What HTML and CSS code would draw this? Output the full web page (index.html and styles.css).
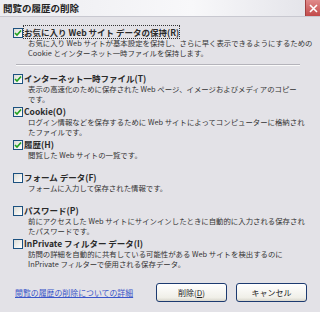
FILE: index.html
```html
<!DOCTYPE html>
<html lang="ja">
<head>
    <meta charset="UTF-8">
    <title>閲覧の履歴の削除</title>
    <link rel="stylesheet" href="styles.css">
</head>
<body>
    <div class="dialog">
        <div class="titlebar">
            <span class="title">閲覧の履歴の削除</span>
            <span class="close">
                <svg width="9" height="9" viewBox="0 0 9 9"><path d="M1 1 L8 8 M8 1 L1 8" stroke="#fff" stroke-width="1.6"/></svg>
            </span>
        </div>

        <div class="content">
            <div class="option">
                <span class="check on"><svg width="8" height="8" viewBox="0 0 8 8"><path d="M1 4 L3 6 L7 1.5" fill="none" stroke="#21a121" stroke-width="1.6"/></svg></span>
                <div class="text">
                    <div class="label"><span class="focus">お気に入り Web サイト データの保持(R)</span></div>
                    <div class="desc">お気に入り Web サイトが基本設定を保持し、さらに早く表示できるようにするための<br>Cookie とインターネット一時ファイルを保持します。</div>
                </div>
            </div>

            <div class="sep"></div>

            <div class="option">
                <span class="check on"><svg width="8" height="8" viewBox="0 0 8 8"><path d="M1 4 L3 6 L7 1.5" fill="none" stroke="#21a121" stroke-width="1.6"/></svg></span>
                <div class="text">
                    <div class="label">インターネット一時ファイル(T)</div>
                    <div class="desc">表示の高速化のために保存された Web ページ、イメージおよびメディアのコピー<br>です。</div>
                </div>
            </div>
            <div class="option">
                <span class="check on"><svg width="8" height="8" viewBox="0 0 8 8"><path d="M1 4 L3 6 L7 1.5" fill="none" stroke="#21a121" stroke-width="1.6"/></svg></span>
                <div class="text">
                    <div class="label">Cookie(O)</div>
                    <div class="desc">ログイン情報などを保存するために Web サイトによってコンピューターに格納され<br>たファイルです。</div>
                </div>
            </div>
            <div class="option">
                <span class="check on"><svg width="8" height="8" viewBox="0 0 8 8"><path d="M1 4 L3 6 L7 1.5" fill="none" stroke="#21a121" stroke-width="1.6"/></svg></span>
                <div class="text">
                    <div class="label">履歴(H)</div>
                    <div class="desc">閲覧した Web サイトの一覧です。</div>
                </div>
            </div>
            <div class="option">
                <span class="check"></span>
                <div class="text">
                    <div class="label">フォーム データ(F)</div>
                    <div class="desc">フォームに入力して保存された情報です。</div>
                </div>
            </div>
            <div class="option">
                <span class="check"></span>
                <div class="text">
                    <div class="label">パスワード(P)</div>
                    <div class="desc">前にアクセスした Web サイトにサインインしたときに自動的に入力される保存され<br>たパスワードです。</div>
                </div>
            </div>
            <div class="option">
                <span class="check"></span>
                <div class="text">
                    <div class="label">InPrivate フィルター データ(I)</div>
                    <div class="desc">訪問の詳細を自動的に共有している可能性がある Web サイトを検出するのに<br>InPrivate フィルターで使用される保存データ。</div>
                </div>
            </div>
        </div>

        <div class="footer">
            <a href="#" class="more">閲覧の履歴の削除についての詳細</a>
            <div class="buttons">
                <button class="btn">削除(<u>D</u>)</button>
                <button class="btn">キャンセル</button>
            </div>
        </div>
    </div>
</body>
</html>
```

FILE: styles.css
```css
:root {
    --dialog-bg: #e3e2e7;
    --text-color: #2a2a2a;
    --check-border: #1c5180;
    --link-color: #3a55c8;
}

body {
    margin: 0;
    padding: 0;
    width: 320px;
    height: 312px;
    overflow: hidden;
    background-color: var(--dialog-bg);
    font-family: "Noto Sans CJK JP", "Liberation Sans", sans-serif;
    color: var(--text-color);
}

.dialog {
    width: 320px;
    height: 312px;
    display: flex;
    flex-direction: column;
}

.titlebar {
    height: 17px;
    display: flex;
    align-items: center;
    justify-content: space-between;
    background: linear-gradient(to right, #ececf0, #f8f8fa 60%, #e2e2e8);
    border-bottom: 1px solid #c8c8d0;
    box-sizing: border-box;
}

.title {
    font-size: 9.5px;
    font-weight: bold;
    padding-left: 3px;
    color: #222;
    line-height: 17px;
}

.close {
    width: 14px;
    height: 16px;
    align-self: flex-start;
    background: linear-gradient(to bottom, #e08a8a, #c24a4a);
    border-left: 1px solid #a04040;
    display: flex;
    align-items: center;
    justify-content: center;
}

.content {
    padding: 10px 0 0 13px;
}

.option {
    display: flex;
    align-items: flex-start;
    height: 33px;
}

.check {
    width: 8px;
    height: 8px;
    margin-top: 1px;
    border: 1px solid var(--check-border);
    background: linear-gradient(135deg, #dcdcd6, #ffffff);
    display: flex;
    align-items: center;
    justify-content: center;
    flex-shrink: 0;
}

.text {
    margin-left: 1px;
}

.label {
    font-size: 8.5px;
    font-weight: bold;
    line-height: 10.5px;
    white-space: nowrap;
}

.focus {
    outline: 1px dotted #333;
    outline-offset: 0;
}

.desc {
    font-size: 7.4px;
    line-height: 10px;
    margin-left: 4px;
    white-space: nowrap;
    color: #333;
}

.sep {
    margin: 4px 20px 7px 3px;
    height: 1px;
    background-color: #b4b3ba;
    border-bottom: 1px solid #fafafa;
}

.footer {
    margin-top: 12px;
    padding: 0 13px 0 15px;
    display: flex;
    align-items: center;
    justify-content: space-between;
}

.more {
    font-size: 7.9px;
    color: var(--link-color);
    text-decoration: underline;
}

.buttons {
    display: flex;
    gap: 9px;
}

.btn {
    width: 71px;
    height: 19px;
    padding: 0;
    border: 1px solid #1c3a70;
    border-radius: 3px;
    background: linear-gradient(to bottom, #ffffff, #f0efe8 80%, #d8d6cc);
    font-family: "Noto Sans CJK JP", "Liberation Sans", sans-serif;
    font-size: 8px;
    color: #222;
}
```
